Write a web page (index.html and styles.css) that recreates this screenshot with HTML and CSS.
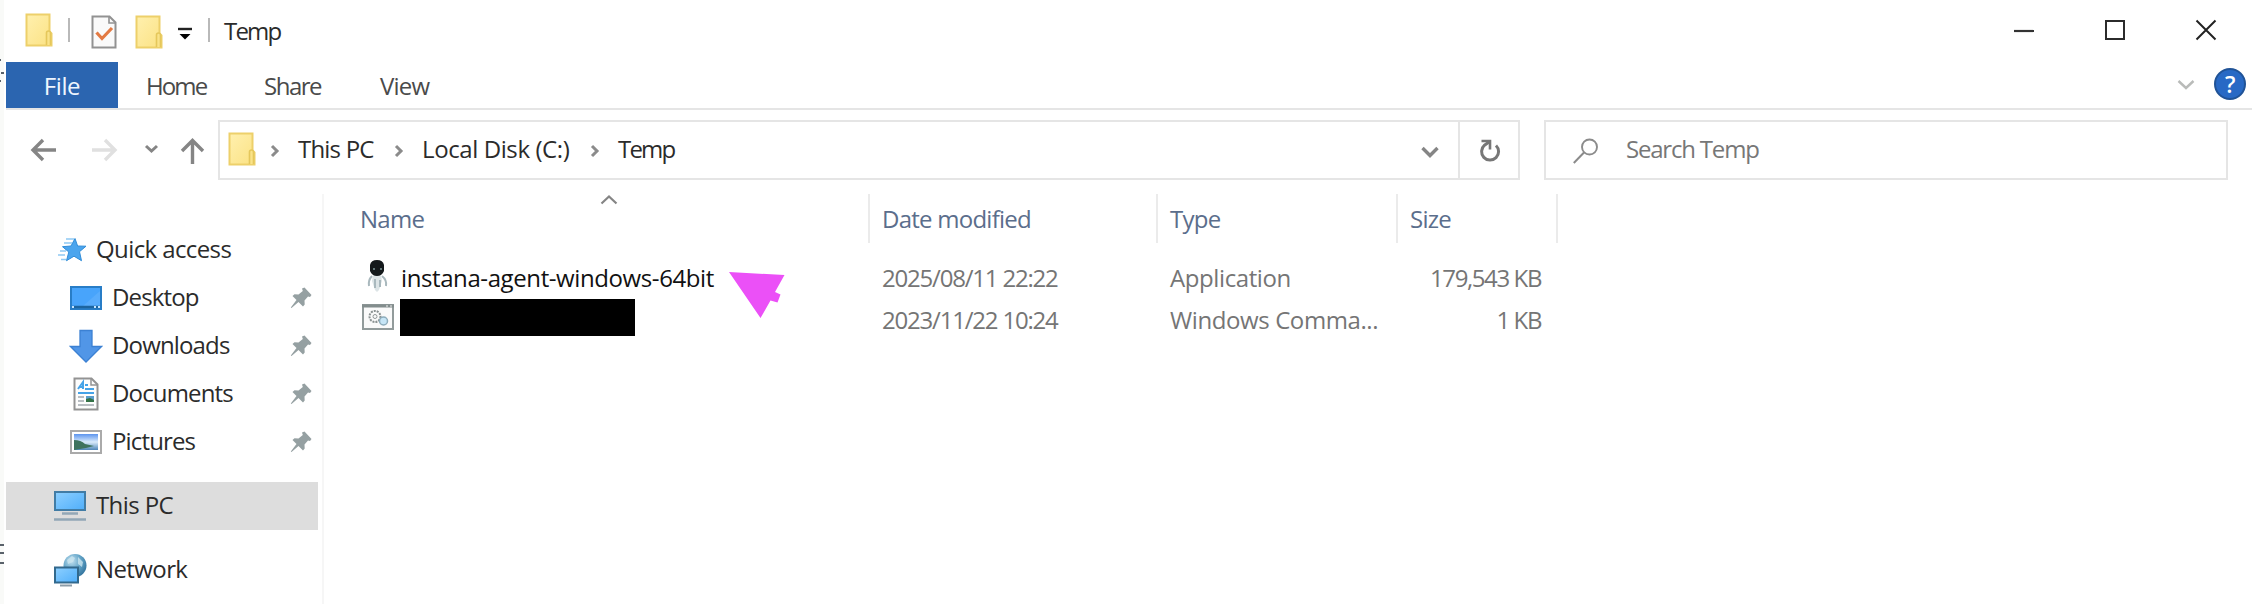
FILE: index.html
```html
<!DOCTYPE html>
<html lang="en">
<head>
<meta charset="utf-8">
<title>Temp</title>
<link rel="stylesheet" href="styles.css">
</head>
<body>
<svg class="defs" width="0" height="0">
  <defs>
    <linearGradient id="yellow" x1="0" y1="0" x2="1" y2="1"><stop offset="0" stop-color="#fff0ae"/><stop offset="1" stop-color="#fbe284"/></linearGradient>
    <linearGradient id="screen" x1="0" y1="0" x2="1" y2="1"><stop offset="0" stop-color="#8ed0ff"/><stop offset="1" stop-color="#4faefa"/></linearGradient>
    <linearGradient id="sky" x1="0" y1="0" x2="0" y2="1"><stop offset="0" stop-color="#5c94ee"/><stop offset=".5" stop-color="#d9ebfb"/><stop offset="1" stop-color="#4e86b8"/></linearGradient>
    <radialGradient id="globe" cx=".35" cy=".3" r=".8"><stop offset="0" stop-color="#c3e2f1"/><stop offset=".5" stop-color="#64a5c8"/><stop offset="1" stop-color="#2b6d98"/></radialGradient>
    <symbol id="folder" viewBox="0 0 28 34"><path d="M1.5 1.5h23v17l2 2v12h-25z" fill="url(#yellow)" stroke="#edd06a" stroke-width="2"/><path d="M21.5 32V20q0-2 2-2t2 2v12" fill="#fae389" stroke="#e5c75b" stroke-width="1.6"/></symbol>
    <symbol id="pin" viewBox="0 0 22 22"><path d="M12 1.5 14.5.5 21.500 8 20 10l-2-.4-3.500 4 .2 4-1.700 1.900-4.500-4.500L1.500 21 .8 20.500 6.500 13 2.500 9l2-1.700 4 .2L12.800 4z" fill="#95a0a2"/></symbol>
    <symbol id="crumb" viewBox="0 0 10 14"><path d="m2 2 5 5-5 5" fill="none" stroke="#8b8b8b" stroke-width="3"/></symbol>
  </defs>
</svg>
<div class="window">
  <header class="titlebar">
    <svg class="t-folder" width="28" height="34"><use href="#folder"/></svg>
    <i class="sep"></i>
    <svg class="t-check" width="26" height="34" viewBox="0 0 26 34"><path d="M1.500 1.500h17l6 6v25h-23z" fill="#fafafa" stroke="#929292" stroke-width="2"/><path d="M18 2v6h6" fill="none" stroke="#929292" stroke-width="1.600"/><path d="m5.500 17.500 5.500 6L21 13" fill="none" stroke="#e37a43" stroke-width="3.200"/></svg>
    <svg class="t-folder2" width="28" height="34"><use href="#folder"/></svg>
    <svg class="t-more" width="16" height="14" viewBox="0 0 16 14"><path d="M1 2h14" stroke="#222" stroke-width="2.400"/><path d="M2.500 7h11L8 12.500z" fill="#000"/></svg>
    <i class="sep sep2"></i>
    <span class="title">Temp</span>
    <div class="controls">
      <svg width="22" height="22" viewBox="0 0 22 22"><path d="M1 12h20" stroke="#333" stroke-width="2.200"/></svg>
      <svg width="22" height="22" viewBox="0 0 22 22"><path d="M2 2h18v18H2z" fill="none" stroke="#2b2b2b" stroke-width="2"/></svg>
      <svg width="22" height="22" viewBox="0 0 22 22"><path d="m1.500 1.500 19 19m0-19-19 19" stroke="#222" stroke-width="2"/></svg>
    </div>
  </header>
  <nav class="tabs">
    <span class="file">File</span><span class="tab home">Home</span><span class="tab share">Share</span><span class="tab view">View</span>
    <svg class="expand" width="18" height="12" viewBox="0 0 18 12"><path d="m1.500 2 7.500 7 7.500-7" fill="none" stroke="#b9bbb9" stroke-width="2.400"/></svg>
    <span class="help">?</span>
  </nav>
  <div class="address-row">
    <svg class="history" width="190" height="28" viewBox="0 0 190 28"><g fill="none" stroke-width="3.400"><path d="M13 4 3 14l10 10M3 14h23" stroke="#858585"/><path d="M75 4l10 10-10 10M85 14H62" stroke="#e0e0e0"/><path d="m116 10 5.500 5 5.500-5" stroke="#858585" stroke-width="3"/><path d="m152 15 10.500-10.500L173 15M162.500 5v23" stroke="#858585"/></g></svg>
    <div class="address">
      <svg class="a-folder" width="28" height="34"><use href="#folder"/></svg>
      <svg class="crumb c1" width="10" height="14"><use href="#crumb"/></svg><span class="w-pc">This PC</span>
      <svg class="crumb c2" width="10" height="14"><use href="#crumb"/></svg><span class="w-disk">Local Disk (C:)</span>
      <svg class="crumb c3" width="10" height="14"><use href="#crumb"/></svg><span class="w-temp">Temp</span>
      <svg class="drop" width="18" height="14" viewBox="0 0 18 14"><path d="m1.500 3 7.500 7.500L16.500 3" fill="none" stroke="#858585" stroke-width="3.400"/></svg>
      <div class="refresh"><svg width="22" height="24" viewBox="0 0 22 24"><path d="M17 6.500A8.500 8.500 0 1 1 5.500 6.200L10 3" fill="none" stroke="#777" stroke-width="3"/><path d="M2.500 2H11v8.500" fill="none" stroke="#777" stroke-width="2.600"/></svg></div>
    </div>
    <div class="search">
      <svg width="26" height="26" viewBox="0 0 26 26"><circle cx="16.500" cy="9" r="7.500" fill="none" stroke="#8b8b8b" stroke-width="1.900"/><path d="M11 14.500.8 25" stroke="#8b8b8b" stroke-width="2"/></svg>
      <span>Search Temp</span>
    </div>
  </div>
  <main class="content">
    <aside class="sidebar">
      <div class="item top quick"><svg width="30" height="26" viewBox="0 0 30 26"><path d="m18 1.500 2.600 7.500 8.400.2-6.500 5.500 2 9-7.500-4.500-7.500 4.500 2.300-8.700L5.500 9.700l8.500-.7z" fill="#4ba5ee" stroke="#318dd8"/><path d="M9 2h8M7 6h8M3 14h6M1 18h7M4 22.500h5" stroke="#8ec9f4" stroke-width="1.700"/></svg><span>Quick access</span></div>
      <div class="item"><svg width="34" height="26" viewBox="0 0 34 26"><path d="M2 2h30v22H2z" fill="#48a4fb" stroke="#287dc7" stroke-width="2"/><path d="m14 21 17-15v15z" fill="#58acfc"/><path d="M3 22h28" stroke="#1c649f" stroke-width="2.500"/><path d="M3 22h2m20 0h2m2 0h2" stroke="#c4e4ff" stroke-width="2"/></svg><span>Desktop</span><svg class="pin" width="22" height="22"><use href="#pin"/></svg></div>
      <div class="item"><svg width="34" height="34" viewBox="0 0 34 34"><path d="M11 1.500h12v16h9.500L17 33 1.500 17.500H11z" fill="#5196e7" stroke="#3c81d3" stroke-width="1.300"/></svg><span>Downloads</span><svg class="pin" width="22" height="22"><use href="#pin"/></svg></div>
      <div class="item"><svg width="34" height="34" viewBox="0 0 34 34"><path d="M5.500 1.500h17l6 6v25h-23z" fill="#fdfdfd" stroke="#939393" stroke-width="2"/><path d="M22 2v6h6" fill="none" stroke="#939393" stroke-width="1.500"/><path d="m9 12 5-7v7m-3-2h3M16 8h3m-3 4h9M9 16h16" fill="none" stroke="#45a3e8" stroke-width="2"/><path d="M9 20h6m-6 4h6m-6 4h16" stroke="#a1a9b0" stroke-width="1.700"/><path d="M17 19h8v6h-8z" fill="#5b9dcb"/><path d="m17 25 0-3 4-1 4 2v2z" fill="#347247"/></svg><span>Documents</span><svg class="pin" width="22" height="22"><use href="#pin"/></svg></div>
      <div class="item"><svg width="34" height="26" viewBox="0 0 34 26"><path d="M2 2h30v22H2z" fill="#fff" stroke="#aaa" stroke-width="2"/><path d="M5 5h24v16H5z" fill="url(#sky)"/><path d="M5 11q7 0 11 4l9 2-8 2-12 2z" fill="#3e735e"/></svg><span>Pictures</span><svg class="pin" width="22" height="22"><use href="#pin"/></svg></div>
      <div class="item top selected"><svg width="34" height="32" viewBox="0 0 34 32"><path d="M2 2h30v18H2z" fill="url(#screen)" stroke="#417ca5" stroke-width="2"/><path d="M9 23.500h16M1 29.500h32" stroke="#92a7b6" stroke-width="2.400"/></svg><span>This PC</span></div>
      <div class="item top network"><svg width="34" height="34" viewBox="0 0 34 34"><circle cx="22" cy="12.500" r="11.500" fill="url(#globe)"/><path d="m14 7 5-4 3 2-2 4-5 2zM25 4l5 5-1 5-4-3z" fill="#cbe5ef" opacity=".8"/><path d="M2 14.500h23v15H2z" fill="url(#screen)" stroke="#32698d" stroke-width="2"/><path d="M7 32.500h12" stroke="#8c9ca8" stroke-width="2"/></svg><span>Network</span></div>
    </aside>
    <section class="list">
      <div class="grid head">
        <div class="name">Name<svg class="sort" width="18" height="11" viewBox="0 0 18 11"><path d="m1.500 9.500 7.500-7 7.500 7" fill="none" stroke="#858585" stroke-width="2.200"/></svg></div>
        <div>Date modified</div><div>Type</div><div>Size</div>
      </div>
      <div class="grid row first">
        <div class="name"><svg width="34" height="34" viewBox="0 0 34 34"><path d="M12 16q4 2 8 0l1 6-3 9-2 2-2-2-3-9z" fill="#dce4e6"/><path d="M11 17q-4 4-3 10m13-10q5 4 4 10M14 20v9m5-8v7" fill="none" stroke="#a9b8bd" stroke-width="2"/><path d="M9 6q1-5 7-5t7 5v6q-2 5-7 5t-7-5z" fill="#14191b"/><path d="M12 10h2m5 0h2" stroke="#7e9698" stroke-width="1.400"/></svg><span>instana-agent-windows-64bit</span></div>
        <div class="date">2025/08/11 22:22</div><div>Application</div><div class="size">179,543 KB</div>
      </div>
      <div class="grid row">
        <div class="name"><svg class="cmd" width="34" height="28" viewBox="0 0 34 28"><path d="M2 2h30v24H2z" fill="#fafafa" stroke="#929b9b" stroke-width="2"/><path d="M1 3h32" stroke="#838d8d" stroke-width="3"/><path d="M25 3h2m2 0h2" stroke="#eee"/><circle cx="14" cy="13.500" r="5.500" fill="none" stroke="#8a9191" stroke-width="2" stroke-dasharray="2 1"/><circle cx="14" cy="13.500" r="2" fill="none" stroke="#929898"/><circle cx="22.500" cy="18" r="4" fill="#c6e5f6" stroke="#8dacbb" stroke-width="1.500"/></svg><i class="redacted"></i></div>
        <div class="date">2023/11/22 10:24</div><div>Windows Comma...</div><div class="size">1 KB</div>
      </div>
    </section>
  </main>
</div>
<svg class="pointer" width="56" height="47" viewBox="0 0 56 47"><path d="M0 0 55.500 3 46 20l5.500 2.500-3 8-7-2L31.500 46z" fill="#eb50f7"/></svg>
<svg class="edge" width="5" height="604" viewBox="0 0 5 604"><path d="M0 60h1M1 73h3M0 81h1M0 545h4M0 553h4M0 563h4" stroke="#59616a" stroke-width="2"/></svg>
</body>
</html>
```
FILE: styles.css
```css
* { box-sizing: border-box; }
body { margin: 0; width: 2254px; height: 604px; overflow: hidden; background: #fff; font: 24px/46px "Open Sans", "Noto Sans", sans-serif; letter-spacing: -.4px; color: #2b2b2b; white-space: nowrap; }
svg { display: block; flex: none; }
.defs { position: absolute; }
.window { height: 604px; border-left: 4px solid #f9faf8; padding-left: 2px; }
.titlebar { display: flex; height: 62px; align-items: flex-start; padding-left: 19px; }
.t-folder { margin-top: 13px; }
.sep { width: 2px; height: 24px; margin: 18px 0 0 15px; background: #b9b9b9; }
.t-check { margin: 15px 0 0 21px; }
.t-folder2 { margin: 15px 0 0 18px; }
.t-more { margin: 27px 0 0 14px; }
.sep2 { margin-left: 15px; }
.title { margin: 8px 0 0 14px; letter-spacing: -1.8px; }
.controls { display: flex; gap: 69px; margin: 19px 37px 0 auto; }
.tabs { display: flex; height: 48px; border-bottom: 2px solid #e5e5e5; margin-right: 2px; color: #4a4a4a; }
.tabs span { line-height: 47px; }
.tabs .file { width: 112px; background: #2b65b0; color: #eef6ff; text-align: center; }
.tabs .home { margin-left: 28px; width: 118px; letter-spacing: -1.9px; }
.tabs .share { width: 116px; letter-spacing: -1.5px; }
.tabs .view { letter-spacing: -.8px; }
.expand { margin: 17px 19px 0 auto; }
.tabs .help { width: 32px; height: 32px; margin: 6px 6px 0 0; border: 2px solid #205397; border-radius: 50%; background: #2869c5; color: #fff; font-size: 23px; font-weight: 600; line-height: 28px; text-align: center; }
.address-row { display: flex; padding-top: 10px; height: 84px; }
.history { margin: 16px 0 0 24px; }
.address { display: flex; margin-left: -2px; width: 1302px; height: 60px; border: 2px solid #e5e5e5; padding: 4px 0 0 8px; }
.a-folder { margin-top: 6px; }
.crumb { margin: 18px 18px 0 14px; }
.w-pc { width: 77px; letter-spacing: -.8px; }
.w-disk { width: 150px; }
.w-temp { letter-spacing: -1.8px; }
.c2 { margin-left: 19px; }
.c3 { margin-left: 18px; }
.drop { margin: 19px 19px 0 auto; }
.refresh { width: 60px; height: 56px; margin-top: -4px; border-left: 2px solid #e5e5e5; padding: 17px 0 0 19px; }
.search { display: flex; width: 684px; height: 60px; margin-left: 24px; border: 2px solid #e5e5e5; padding: 4px 0 0 27px; color: #777; gap: 27px; letter-spacing: -1.2px; }
.search svg { margin-top: 12px; }
.content { display: flex; height: 410px; }
.sidebar { width: 318px; border-right: 2px solid #f6f6f6; padding-top: 32px; }
.item { display: flex; align-items: center; width: 312px; height: 48px; padding: 0 6px 0 63px; gap: 9px; letter-spacing: -.85px; }
.item span { height: 48px; }
.item .pin { margin-left: auto; }
.top { padding-left: 47px; gap: 9px; letter-spacing: -.6px; }
.quick { padding-left: 51px; }
.selected { margin: 16px 0; background: #ddd; }
.list { flex: 1; }
.grid { display: grid; grid-template-columns: 546px 288px 240px 160px; color: #757575; }
.head { height: 49px; color: #5b6e8c; line-height: 50px; margin-bottom: 15px; letter-spacing: -.75px; }
.head > div { border-right: 2px solid #ebebeb; height: 49px; padding-left: 12px; }
.head .name { display: flex; padding-left: 36px; }
.sort { margin: 0 0 0 176px; }
.row { height: 42px; line-height: 40px; }
.row > div { padding-left: 12px; }
.row .name { display: flex; padding-left: 37px; color: #111; gap: 6px; }
.row .name svg { margin-top: 1px; }
.row .name .cmd { margin: 3px 0 0; }
.redacted { width: 235px; height: 37px; background: #000; margin: -1px 0 0 -1px; }
.row .date { letter-spacing: -1.2px; }
.row .size { text-align: right; padding-right: 17px; letter-spacing: -1.4px; }
.pointer { position: absolute; left: 729px; top: 272px; }
.edge { position: absolute; left: 0; top: 0; }
```
